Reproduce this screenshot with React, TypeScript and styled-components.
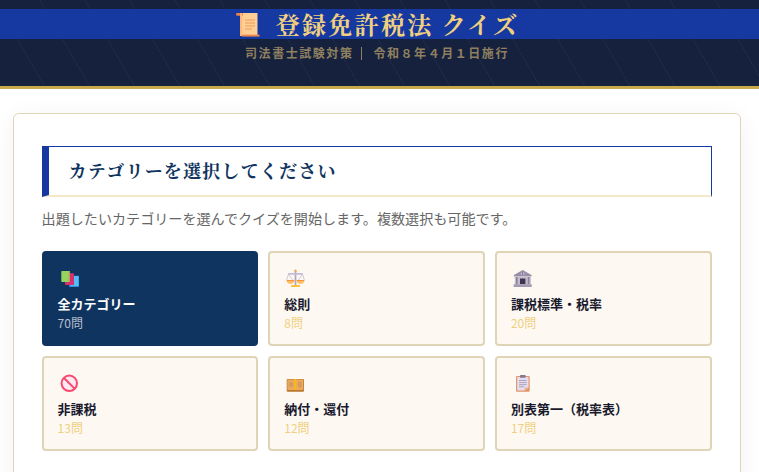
import React from "react";
import styled, { createGlobalStyle } from "styled-components";

const Global = createGlobalStyle`
  html, body { margin: 0; padding: 0; background: #fff; overflow: hidden; }
  body { font-family: "Noto Sans CJK JP", "Noto Sans", sans-serif; }
`;

const Page = styled.div`
  width: 759px;
  height: 472px;
  overflow: hidden;
`;

const Header = styled.header`
  padding-top: 9px;
  height: 77px;
  border-bottom: 3px solid #c9a84c;
  text-align: center;
  background-color: #16213e;
  background-image: repeating-linear-gradient(
    60deg,
    transparent 0 38px,
    rgba(255, 255, 255, 0.035) 38px 39px
  );
`;

const Title = styled.h1`
  margin: 0;
  height: 30px;
  padding-right: 5px;
  display: flex;
  align-items: center;
  justify-content: center;
  gap: 16px;
  background: #1539a0;
  color: #f0d080;
  font-family: "Noto Serif CJK JP", "Noto Serif JP", "Noto Sans CJK JP", serif;
  font-size: 24px;
  line-height: 30px;
  font-weight: 700;
  letter-spacing: 2.3px;
  white-space: nowrap;
`;

const ScrollIcon = styled.svg`
  flex: none;
  width: 25px;
  height: 26px;
  margin-top: 2px;
`;

const Subtitle = styled.p`
  margin: 5px 0 0;
  padding-right: 5px;
  color: #8f8060;
  font-size: 12px;
  line-height: 18px;
  font-weight: 700;
  letter-spacing: 1.55px;
`;

const Divider = styled.span`
  display: inline-block;
  width: 1px;
  height: 13px;
  margin: 0 11px 0 8px;
  vertical-align: -2px;
  background: #8f8060;
`;

const Main = styled.main`
  padding: 24px 0 0 12.6px;
`;

const Panel = styled.section`
  box-sizing: border-box;
  width: 728px;
  height: 400px;
  padding: 32px 28px;
  background: #fff;
  border: 1px solid #e0d5b8;
  border-radius: 6px;
  box-shadow: 0 4px 24px rgba(0, 0, 0, 0.06);
`;

const Heading = styled.h2`
  box-sizing: border-box;
  margin: 0;
  height: 51px;
  padding-left: 20px;
  line-height: 46px;
  border-style: solid;
  border-color: #1539a0;
  border-bottom-color: #f5e8c8;
  border-width: 1px 1px 2px 7px;
  color: #0f3460;
  font-family: "Noto Serif CJK JP", "Noto Serif JP", "Noto Sans CJK JP", serif;
  font-size: 18px;
  font-weight: 700;
  letter-spacing: 1.2px;
`;

const Lead = styled.p`
  margin: 11px 0 0;
  height: 20px;
  color: #666;
  font-size: 14.08px;
  line-height: 20px;
  white-space: nowrap;
`;

const Grid = styled.div`
  margin-top: 23px;
  display: grid;
  grid-template-columns: repeat(3, 1fr);
  grid-auto-rows: 95px;
  gap: 10px;
`;

const Card = styled.button<{ $active?: boolean }>`
  box-sizing: border-box;
  padding: 15px 14px 0;
  display: flex;
  flex-direction: column;
  align-items: flex-start;
  text-align: left;
  font-family: inherit;
  border: 2px solid ${(p) => (p.$active ? "#0f3460" : "#dfd4b6")};
  border-radius: 4px;
  background: ${(p) => (p.$active ? "#0f3460" : "#fdf9f2")};
`;

const CardIcon = styled.svg`
  display: block;
  width: 24px;
  height: 22px;
`;

const Name = styled.span<{ $active?: boolean }>`
  margin-top: 4px;
  font-size: 13px;
  line-height: 20px;
  font-weight: 700;
  color: ${(p) => (p.$active ? "#fff" : "#1a1a2e")};
`;

const Count = styled.span<{ $active?: boolean }>`
  font-size: 12px;
  line-height: 18px;
  color: ${(p) => (p.$active ? "rgba(255,255,255,0.7)" : "#f0d080")};
`;

const Books = () => (
  <>
    <rect x="11" y="7.7" width="10" height="11.3" rx="0.8" fill="#2f8fdc" />
    <rect x="12.5" y="8" width="8" height="10" fill="#55bdf5" />
    <rect x="7" y="5.3" width="9" height="11.7" rx="0.8" fill="#d8306e" />
    <rect x="3.3" y="3" width="8.7" height="11" rx="0.8" fill="#96d45e" />
    <rect x="10.5" y="3" width="1.5" height="11" fill="#b0a860" />
  </>
);

const Scales = () => (
  <>
    <rect x="10.6" y="3" width="1.8" height="14" fill="#b3a6c4" />
    <rect x="4" y="5" width="15" height="1.8" rx="0.9" fill="#c6bcd6" />
    <circle cx="11.5" cy="2.8" r="1.2" fill="#f2a64a" />
    <path d="M4.5 6 L2.7 12 M4.5 6 L8.5 12 M18.5 6 L14.5 12 M18.5 6 L20.3 12" stroke="#c6bcd6" strokeWidth="0.8" fill="none" />
    <path d="M2.7 12 H10.3 A3.8 4 0 0 1 2.7 12 Z" fill="#ffc46b" />
    <path d="M12.7 12 H20.3 A3.8 4 0 0 1 12.7 12 Z" fill="#ffc46b" />
    <rect x="2.7" y="12" width="7.6" height="1.2" fill="#f5963f" />
    <rect x="12.7" y="12" width="7.6" height="1.2" fill="#f5963f" />
    <rect x="7" y="17" width="9" height="2" rx="0.6" fill="#fcc23e" />
  </>
);

const Bank = () => (
  <>
    <path d="M11.7 2 L20.5 7 V8.5 H2.9 V7 Z" fill="#9a90a6" />
    <circle cx="11.7" cy="5.5" r="1.6" fill="#d9d2e4" />
    <rect x="11.2" y="4.2" width="1" height="2.6" fill="#6b4fa0" />
    <rect x="3.8" y="9" width="16" height="7.2" fill="#c4bccd" />
    <rect x="5" y="9" width="1.6" height="7.2" fill="#8b8198" />
    <rect x="16.8" y="9" width="1.6" height="7.2" fill="#8b8198" />
    <rect x="9" y="10.5" width="5.4" height="5.7" fill="#3d3450" />
    <rect x="2.7" y="16.2" width="18" height="2.8" fill="#a59bb0" />
  </>
);

const Prohibited = () => (
  <>
    <circle cx="11.3" cy="10.3" r="7.7" fill="#fdeaf2" stroke="#f8486e" strokeWidth="2" />
    <path d="M6 5 L16.6 15.6" stroke="#f8486e" strokeWidth="2" />
  </>
);

const Money = () => (
  <>
    <rect x="2.7" y="6" width="17.3" height="12.7" rx="1" fill="#b9772f" />
    <rect x="3.3" y="6.4" width="16" height="10.6" rx="0.6" fill="#eaa95e" />
    <circle cx="7" cy="11.5" r="2.4" fill="#d59a5c" />
    <rect x="14" y="8.5" width="3.6" height="6" rx="1" fill="#d59a5c" />
    <rect x="10.2" y="6" width="2.2" height="11" fill="#fdb913" />
  </>
);

const Clipboard = () => (
  <>
    <rect x="5" y="3" width="13.7" height="15.7" rx="1" fill="#e39468" />
    <path d="M6.2 4 H17.5 V14.5 L13.5 17.5 H6.2 Z" fill="#e6deee" />
    <path d="M13.5 17.5 L17.5 14.5 H13.5 Z" fill="#f0b48a" />
    <rect x="9" y="2" width="5.6" height="2.8" rx="0.6" fill="#85798f" />
    <path d="M8 7.5 H15.7 M8 9.6 H15.7 M8 11.7 H15.7 M8 13.8 H13" stroke="#a49cba" strokeWidth="0.9" />
  </>
);

const items = [
  { i: <Books />, n: "全カテゴリー", c: "70問", a: true },
  { i: <Scales />, n: "総則", c: "8問" },
  { i: <Bank />, n: "課税標準・税率", c: "20問" },
  { i: <Prohibited />, n: "非課税", c: "13問" },
  { i: <Money />, n: "納付・還付", c: "12問" },
  { i: <Clipboard />, n: "別表第一（税率表）", c: "17問" },
];

export default function App() {
  return (
    <Page>
      <Global />
      <Header>
        <Title>
          <ScrollIcon viewBox="0 0 25 26">
            <rect x="5" y="1" width="17.5" height="23" fill="#ffd096" />
            <rect x="1" y="1" width="7" height="2.8" rx="1.2" fill="#e8824a" />
            <rect x="5" y="1" width="2" height="23" fill="#ffb878" />
            <path d="M10 8 H20 M10 11 H20 M10 14 H20 M10 17 H17" stroke="#f09a55" strokeWidth="1" />
            <path d="M7 22.6 H24.5 V24.6 H7 Z" fill="#ee8a50" />
          </ScrollIcon>
          <span>登録免許税法 クイズ</span>
        </Title>
        <Subtitle>
          司法書士試験対策
          <Divider />
          令和８年４月１日施行
        </Subtitle>
      </Header>
      <Main>
        <Panel>
          <Heading>カテゴリーを選択してください</Heading>
          <Lead>出題したいカテゴリーを選んでクイズを開始します。複数選択も可能です。</Lead>
          <Grid>
            {items.map((i) => (
              <Card key={i.n} $active={i.a}>
                <CardIcon viewBox="0 0 24 22">{i.i}</CardIcon>
                <Name $active={i.a}>{i.n}</Name>
                <Count $active={i.a}>{i.c}</Count>
              </Card>
            ))}
          </Grid>
        </Panel>
      </Main>
    </Page>
  );
}
